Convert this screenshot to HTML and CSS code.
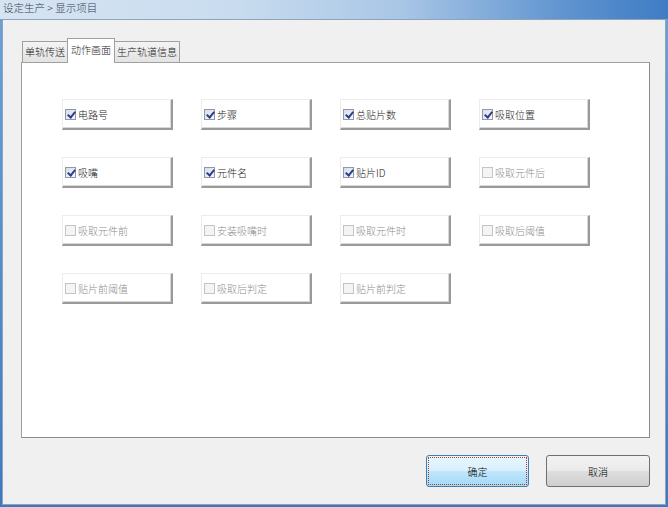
FILE: index.html
```html
<!DOCTYPE html>
<html lang="zh-CN">
<head>
    <meta charset="UTF-8">
    <title>显示项目</title>
    <link rel="stylesheet" href="styles.css">
</head>
<body>
    <div class="window">
        <!-- Title bar -->
        <div class="titlebar">设定生产 &gt; 显示项目</div>

        <div class="frame">
            <div class="client">
                <!-- Tabs -->
                <div class="tabs">
                    <div class="tab">单轨传送</div>
                    <div class="tab active">动作画面</div>
                    <div class="tab">生产轨道信息</div>
                </div>

                <div class="panel">
                    <div class="check-grid">
                        <label class="check-box"><span class="box checked"></span>电路号</label>
                        <label class="check-box"><span class="box checked"></span>步骤</label>
                        <label class="check-box"><span class="box checked"></span>总贴片数</label>
                        <label class="check-box"><span class="box checked"></span>吸取位置</label>

                        <label class="check-box"><span class="box checked"></span>吸嘴</label>
                        <label class="check-box"><span class="box checked"></span>元件名</label>
                        <label class="check-box"><span class="box checked"></span>贴片ID</label>
                        <label class="check-box disabled"><span class="box"></span>吸取元件后</label>

                        <label class="check-box disabled"><span class="box"></span>吸取元件前</label>
                        <label class="check-box disabled"><span class="box"></span>安装吸嘴时</label>
                        <label class="check-box disabled"><span class="box"></span>吸取元件时</label>
                        <label class="check-box disabled"><span class="box"></span>吸取后阈值</label>

                        <label class="check-box disabled"><span class="box"></span>贴片前阈值</label>
                        <label class="check-box disabled"><span class="box"></span>吸取后判定</label>
                        <label class="check-box disabled"><span class="box"></span>贴片前判定</label>
                    </div>
                </div>

                <div class="footer">
                    <button class="btn btn-default">确定</button>
                    <button class="btn">取消</button>
                </div>
            </div>
        </div>
    </div>
</body>
</html>
```

FILE: styles.css
```css
* {
    margin: 0;
    padding: 0;
    box-sizing: border-box;
}

body {
    font-family: "Noto Sans CJK SC", "Liberation Sans", sans-serif;
    font-size: 10px;
    font-weight: 300;
    color: #1a1a1a;
    background: #f0f0f0;
    width: 668px;
    height: 507px;
    overflow: hidden;
}

.window {
    display: flex;
    flex-direction: column;
    height: 507px;
}

/* Aero-like title bar */
.titlebar {
    height: 19px;
    line-height: 16px;
    padding-left: 3px;
    font-size: 10.5px;
    color: #33414f;
    background: linear-gradient(90deg, #d6e4f2 0%, #c9dcef 35%, #a9c6e6 60%, #5e93cf 85%, #3f7cc4 100%);
}

.frame {
    flex: 1;
    padding: 0 2px 2px 2px;
    background: linear-gradient(180deg, #6c9fd6, #3e79c0);
}

.client {
    height: 100%;
    background: #f0f0f0;
    border: 1px solid #8ea4bd;
    display: flex;
    flex-direction: column;
    padding: 17px 15px 0 18px;
}

/* Tabs */
.tabs {
    display: flex;
    align-items: flex-end;
    height: 25px;
    padding-left: 1px;
}

.tab {
    height: 21px;
    line-height: 20px;
    padding: 0 2px;
    font-size: 10px;
    background: linear-gradient(180deg, #f4f4f4, #e3e3e3);
    border: 1px solid #a0a0a0;
    border-bottom: none;
    margin-right: -1px;
}

.tab.active {
    height: 25px;
    line-height: 21px;
    background: #fff;
    position: relative;
    z-index: 1;
    margin-bottom: -1px;
    padding: 0 3px;
}

.panel {
    height: 376px;
    background: #fff;
    border: 1px solid #a0a0a0;
    border-right-color: #8c8c8c;
    border-bottom-color: #8c8c8c;
    padding: 36px 0 0 40px;
}

.check-grid {
    display: grid;
    grid-template-columns: repeat(4, 111px);
    column-gap: 28px;
    row-gap: 27px;
}

.check-box {
    display: flex;
    align-items: center;
    height: 31px;
    padding-left: 2px;
    font-size: 10px;
    background: #fff;
    border-top: 1px solid #ececec;
    border-left: 1px solid #ececec;
    border-right: 2px solid #9a9a9a;
    border-bottom: 2px solid #9a9a9a;
    box-shadow: inset -1px -1px 0 #d8d8d8;
}

.box {
    width: 11px;
    height: 11px;
    margin-right: 2px;
    border: 1px solid #8e99b0;
    background: linear-gradient(135deg, #d8dce6, #f8f8f8);
    position: relative;
}

.box.checked::after {
    content: "";
    position: absolute;
    left: 3px;
    top: 0;
    width: 3px;
    height: 6px;
    border-right: 2px solid #2a3f8c;
    border-bottom: 2px solid #2a3f8c;
    transform: rotate(40deg);
}

.check-box.disabled {
    color: #8d8d8d;
}

.check-box.disabled .box {
    border-color: #c4c4c4;
    background: #f4f4f4;
}

/* Footer buttons */
.footer {
    display: flex;
    justify-content: flex-end;
    gap: 17px;
    padding-top: 17px;
}

.btn {
    width: 104px;
    height: 32px;
    font-family: inherit;
    font-size: 10px;
    font-weight: 300;
    border: 1px solid #707070;
    border-radius: 3px;
    background: linear-gradient(180deg, #f2f2f2 0%, #ebebeb 48%, #dddddd 52%, #cfcfcf 100%);
    color: #000;
}

.btn-default {
    width: 103px;
    border-color: #3c7fb1;
    background: linear-gradient(180deg, #eaf6fd 0%, #d9f0fc 48%, #bee6fd 52%, #a7d9f5 100%);
    outline: 1px dotted #a04030;
    outline-offset: -3px;
}
```
